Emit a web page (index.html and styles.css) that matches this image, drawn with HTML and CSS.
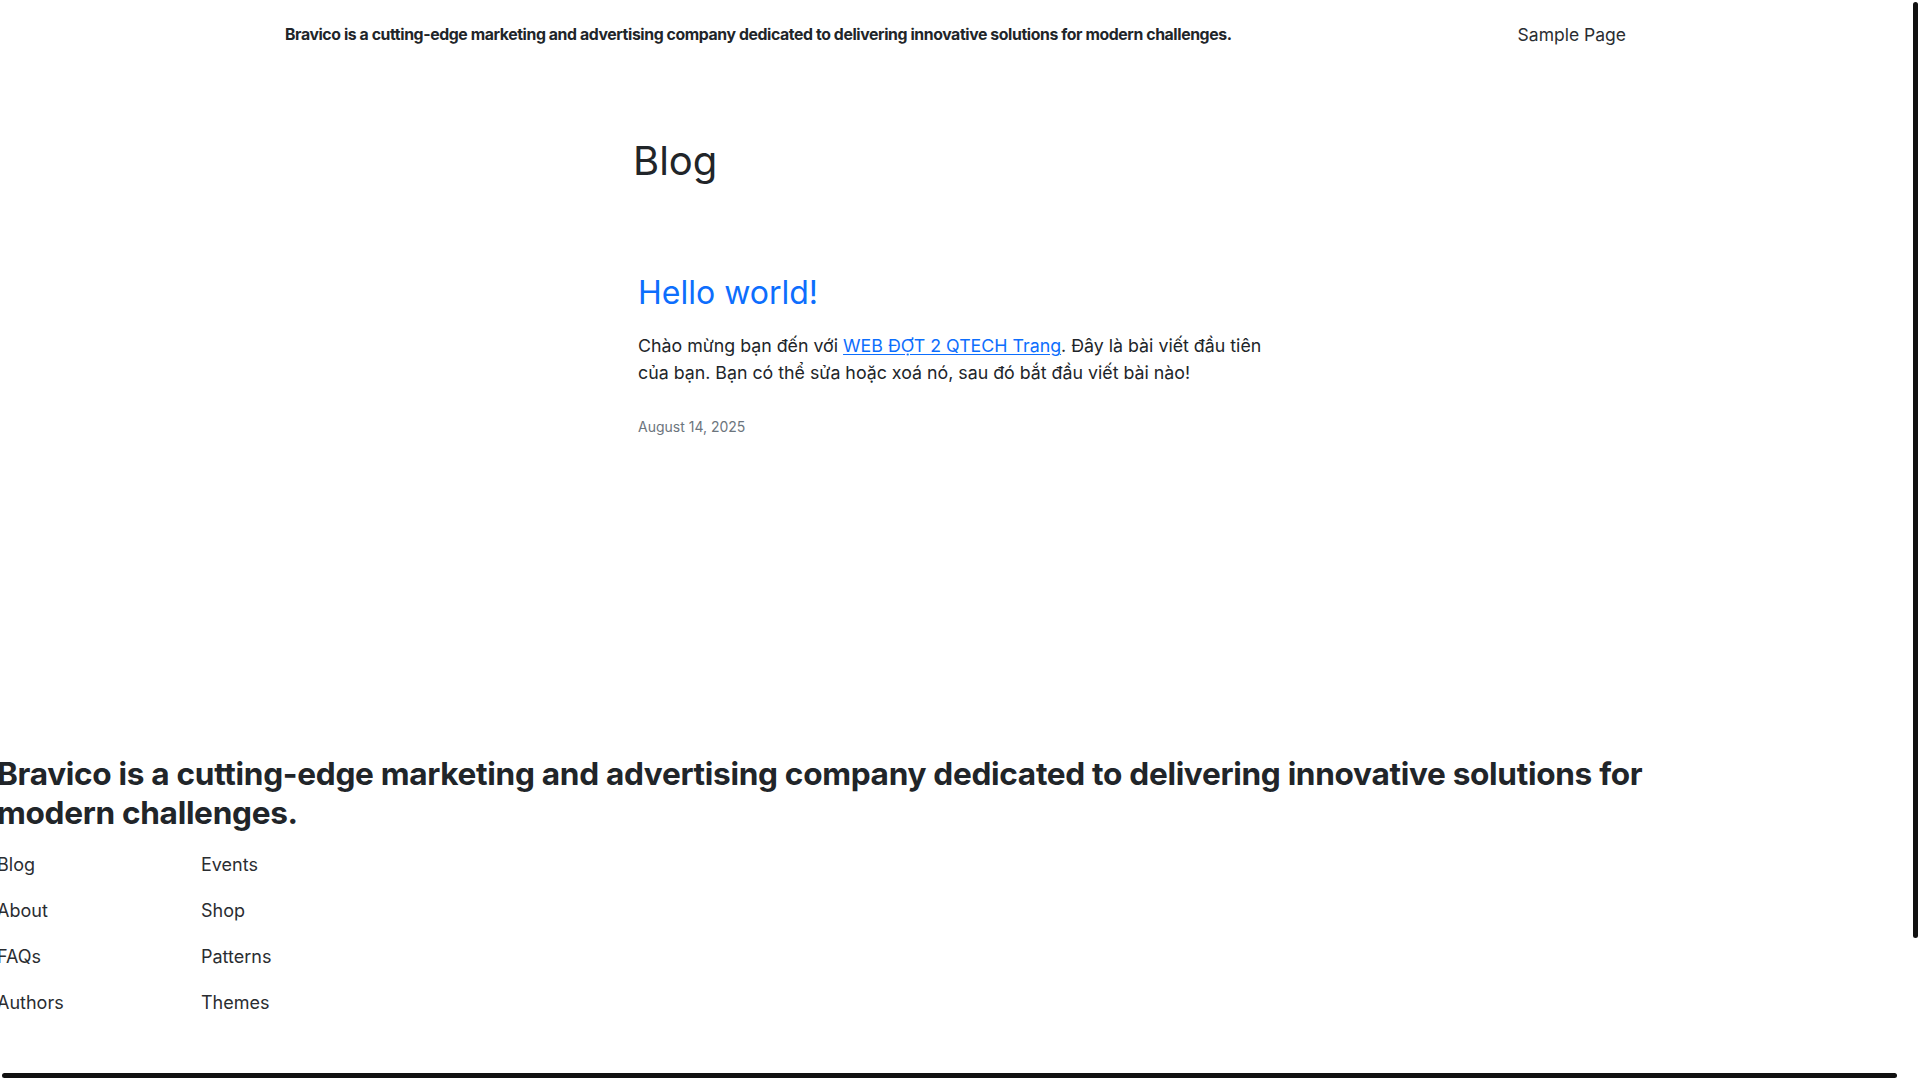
FILE: index.html
```html
<!DOCTYPE html>
<html lang="vi">
<head>
<meta charset="utf-8">
<title>Blog – WEB ĐỢT 2 QTECH Trang</title>
<link rel="stylesheet" href="styles.css">
</head>
<body>
  <header class="site-header">
    <p class="tagline">Bravico is a cutting-edge marketing and advertising company dedicated to delivering innovative solutions for modern challenges.</p>
    <nav class="top-nav"><a href="#" class="top-nav-link">Sample Page</a></nav>
  </header>

  <main class="content">
    <h1 class="page-title">Blog</h1>
    <article class="post">
      <h2 class="post-title"><a href="#" class="post-title-link">Hello world!</a></h2>
      <p class="post-excerpt">Chào mừng bạn đến với <a href="#" class="inline-link">WEB ĐỢT 2 QTECH Trang</a>. Đây là bài viết đầu tiên của bạn. Bạn có thể sửa hoặc xoá nó, sau đó bắt đầu viết bài nào!</p>
      <time class="post-date">August 14, 2025</time>
    </article>
  </main>

  <footer class="site-footer">
    <h2 class="footer-tagline">Bravico is a cutting-edge marketing and advertising company dedicated to delivering innovative solutions for modern challenges.</h2>
    <div class="footer-links">
      <ul class="link-col">
        <li><a href="#">Blog</a></li>
        <li><a href="#">About</a></li>
        <li><a href="#">FAQs</a></li>
        <li><a href="#">Authors</a></li>
      </ul>
      <ul class="link-col">
        <li><a href="#">Events</a></li>
        <li><a href="#">Shop</a></li>
        <li><a href="#">Patterns</a></li>
        <li><a href="#">Themes</a></li>
      </ul>
    </div>
  </footer>

  <div class="scroll-thumb scroll-thumb-v"></div>
  <div class="scroll-thumb scroll-thumb-h"></div>
</body>
</html>
```

FILE: styles.css
```css
html {
  overflow: hidden;
}

body {
  margin: 0;
  font-family: Inter, "Noto Sans", "Liberation Sans", sans-serif;
  color: #212529;
  background: #fff;
}

a {
  color: inherit;
  text-decoration: none;
}

/* Header */
.site-header {
  height: 70px;
  display: flex;
  align-items: center;
  justify-content: space-between;
  padding: 0 294px 0 285px;
}

.tagline {
  margin: 0;
  font-size: 15.8px;
  line-height: 24px;
  font-weight: 700;
  letter-spacing: -0.025em;
}

.top-nav-link {
  font-size: 17.5px;
  line-height: 24px;
  color: #2a2d31;
}

/* Main */
.content {
  width: 654px;
  margin: 0 auto;
  padding-bottom: 317px;
}

.page-title {
  margin: 67px 0 0;
  font-size: 40px;
  line-height: 48px;
  font-weight: 400;
}

.post {
  padding-left: 5px;
  margin-top: 89px;
}

.post-title {
  margin: 0;
  font-size: 32px;
  line-height: 1.2;
  font-weight: 400;
}

.post-title-link {
  color: #0d6efd;
}

.post-excerpt {
  margin: 20px 0 0;
  font-size: 17.8px;
  line-height: 27px;
}

.inline-link {
  color: #0d6efd;
  text-decoration: underline;
  text-underline-offset: 2px;
}

.post-date {
  display: block;
  margin-top: 30px;
  font-size: 14px;
  line-height: 21px;
  color: #6c757d;
}

/* Footer */
.site-footer {
  margin-left: -3px;
}

.footer-tagline {
  margin: 0;
  width: 1700px;
  font-size: 31.6px;
  line-height: 39px;
  font-weight: 700;
  letter-spacing: -0.01em;
}

.footer-links {
  display: grid;
  grid-template-columns: 204px 204px;
  margin-top: 19px;
}

.link-col {
  list-style: none;
  margin: 0;
  padding: 0;
  display: flex;
  flex-direction: column;
  gap: 19px;
}

.link-col a {
  font-size: 18px;
  line-height: 27px;
  color: #2a2d31;
}

/* Overlay scrollbars */
.scroll-thumb {
  position: fixed;
  background: #111;
  border-radius: 3px;
}

.scroll-thumb-v {
  top: 2px;
  right: 2px;
  width: 5px;
  height: 936px;
}

.scroll-thumb-h {
  left: 2px;
  bottom: 2px;
  width: 1895px;
  height: 5px;
}
```
